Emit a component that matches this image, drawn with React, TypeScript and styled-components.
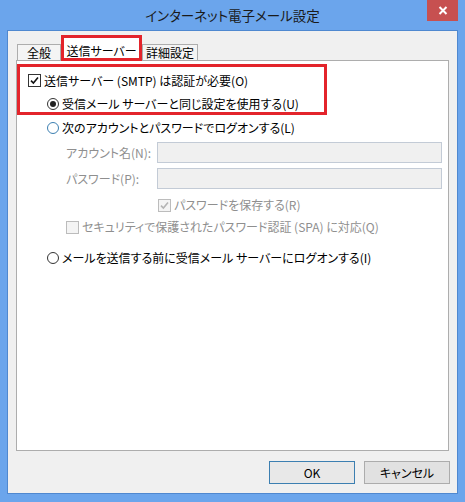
import React from 'react';
import styled, { createGlobalStyle } from 'styled-components';

const GlobalStyle = createGlobalStyle`
  html, body {
    margin: 0;
    padding: 0;
    background: #6ba5ec;
  }
  body {
    font-family: 'Noto Sans CJK JP', 'Noto Sans', sans-serif;
    font-size: 12px;
    font-feature-settings: 'palt';
    color: #000;
  }
`;

const red = '#e3242b';
const disabledText = '#8f8f8f';

const Window = styled.div`
  width: 465px;
  height: 502px;
  background: #6ba5ec;
  display: flex;
  flex-direction: column;
  box-sizing: border-box;
`;

const TitleBar = styled.div`
  position: relative;
  height: 31px;
  flex-shrink: 0;
  display: flex;
  align-items: center;
  justify-content: center;
`;

const Title = styled.div`
  font-size: 13.5px;
  color: #1a1a1a;
  padding-bottom: 2px;
`;

const CloseButton = styled.div`
  position: absolute;
  top: 0;
  right: 7px;
  width: 31px;
  height: 21px;
  background: #c75050;
  display: flex;
  align-items: center;
  justify-content: center;
`;

const Client = styled.div`
  flex: 1;
  margin: 0 8px 9px 8px;
  background: #f0f0f0;
  box-shadow: 0 0 0 1px #4f88d0;
  display: flex;
  flex-direction: column;
  padding: 0 8px;
`;

const TabStrip = styled.div`
  height: 29px;
  flex-shrink: 0;
  display: flex;
  align-items: flex-end;
  padding-left: 1px;
  position: relative;
  z-index: 1;
`;

const Tab = styled.div<{ $w: number }>`
  width: ${p => p.$w}px;
  height: 16px;
  box-sizing: border-box;
  border: 1px solid #adadad;
  border-bottom: none;
  background: #f4f4f4;
  display: flex;
  align-items: center;
  justify-content: center;
  line-height: 14px;
  padding-top: 1px;
`;

const ActiveTab = styled.div<{ $w: number }>`
  width: ${p => p.$w}px;
  height: 26px;
  box-sizing: border-box;
  border: 3px solid ${red};
  background: #fff;
  display: flex;
  align-items: center;
  justify-content: center;
  padding-top: 4px;
  margin-bottom: -1px;
`;

const Panel = styled.div`
  flex: 1;
  background: #fff;
  border: 1px solid #adadad;
  display: flex;
  flex-direction: column;
`;

const RedBox = styled.div`
  width: 310px;
  height: 51px;
  box-sizing: border-box;
  margin-top: 3px;
  border: 3px solid ${red};
  padding: 2px 0 0 7px;
`;

const Row = styled.div<{ $h: number; $indent: number; $top?: number }>`
  display: flex;
  align-items: center;
  height: ${p => p.$h}px;
  padding-left: ${p => p.$indent}px;
  margin-top: ${p => p.$top ?? 0}px;
  flex-shrink: 0;
`;

const Label = styled.span<{ $disabled?: boolean }>`
  color: ${p => (p.$disabled ? disabledText : '#000')};
  white-space: nowrap;
  line-height: 14px;
`;

const FieldLabel = styled.span`
  width: 91px;
  color: ${disabledText};
  white-space: nowrap;
  line-height: 14px;
`;

const Input = styled.div`
  width: 285px;
  height: 21px;
  box-sizing: border-box;
  border: 1px solid #c3cbd6;
  background: #f0f0f0;
`;

const Box = styled.span<{ $disabled?: boolean }>`
  width: 13px;
  height: 13px;
  box-sizing: border-box;
  border: 1px solid ${p => (p.$disabled ? '#bcbcbc' : '#333')};
  background: ${p => (p.$disabled ? '#f4f4f4' : '#fff')};
  display: inline-flex;
  align-items: center;
  justify-content: center;
  margin: 0 3px 0 1px;
  flex-shrink: 0;
`;

const Radio = styled.span<{ $checked?: boolean; $focus?: boolean }>`
  width: 12px;
  height: 12px;
  box-sizing: border-box;
  border-radius: 50%;
  border: 1px solid ${p => (p.$focus ? '#3c7fb1' : '#333')};
  background: #fff;
  display: inline-flex;
  align-items: center;
  justify-content: center;
  margin-right: 3px;
  flex-shrink: 0;
  &::after {
    content: '';
    display: ${p => (p.$checked ? 'block' : 'none')};
    width: 6px;
    height: 6px;
    border-radius: 50%;
    background: #222;
  }
`;

const Footer = styled.div`
  height: 42px;
  flex-shrink: 0;
  box-sizing: border-box;
  padding: 10px 0 9px;
  display: flex;
  justify-content: flex-end;
  gap: 9px;
  margin-right: -1px;
`;

const Button = styled.div<{ $primary?: boolean }>`
  width: 86px;
  height: 23px;
  box-sizing: border-box;
  border: 1px solid ${p => (p.$primary ? '#3c7fb1' : '#acacac')};
  background: ${p => (p.$primary ? '#e8e8e8' : '#e1e1e1')};
  display: flex;
  align-items: center;
  justify-content: center;
  line-height: 14px;
`;

const Check: React.FC<{ color?: string }> = ({ color = '#111' }) => (
  <svg width="9" height="9" viewBox="0 0 9 9">
    <path d="M1 4.6 L3.4 7 L8 1.6" fill="none" stroke={color} strokeWidth="1.6" />
  </svg>
);

const CloseIcon = () => (
  <svg width="10" height="9" viewBox="0 0 10 9">
    <path d="M1.5 1 L8.5 8 M8.5 1 L1.5 8" stroke="#fff" strokeWidth="2" />
  </svg>
);

const App: React.FC = () => {
  return (
    <>
      <GlobalStyle />
      <Window>
        <TitleBar>
          <Title>インターネット電子メール設定</Title>
          <CloseButton>
            <CloseIcon />
          </CloseButton>
        </TitleBar>
        <Client>
          <TabStrip>
            <Tab $w={44}>全般</Tab>
            <ActiveTab $w={81}>送信サーバー</ActiveTab>
            <Tab $w={56}>詳細設定</Tab>
          </TabStrip>
          <Panel>
            <RedBox>
              <Row $h={23} $indent={0}>
                <Box>
                  <Check />
                </Box>
                <Label>送信サーバー (SMTP) は認証が必要(O)</Label>
              </Row>
              <Row $h={24} $indent={20}>
                <Radio $checked />
                <Label>受信メール サーバーと同じ設定を使用する(U)</Label>
              </Row>
            </RedBox>
            <Row $h={26} $indent={30}>
              <Radio $focus />
              <Label>次のアカウントとパスワードでログオンする(L)</Label>
            </Row>
            <Row $h={21} $indent={49} $top={1}>
              <FieldLabel>アカウント名(N):</FieldLabel>
              <Input />
            </Row>
            <Row $h={21} $indent={49} $top={5}>
              <FieldLabel>パスワード(P):</FieldLabel>
              <Input />
            </Row>
            <Row $h={22} $indent={140} $top={5}>
              <Box $disabled>
                <Check color="#b4b4b4" />
              </Box>
              <Label $disabled>パスワードを保存する(R)</Label>
            </Row>
            <Row $h={22} $indent={48}>
              <Box $disabled />
              <Label $disabled>セキュリティで保護されたパスワード認証 (SPA) に対応(Q)</Label>
            </Row>
            <Row $h={22} $indent={30} $top={9}>
              <Radio />
              <Label>メールを送信する前に受信メール サーバーにログオンする(I)</Label>
            </Row>
          </Panel>
          <Footer>
            <Button $primary>OK</Button>
            <Button>キャンセル</Button>
          </Footer>
        </Client>
      </Window>
    </>
  );
};

export default App;
